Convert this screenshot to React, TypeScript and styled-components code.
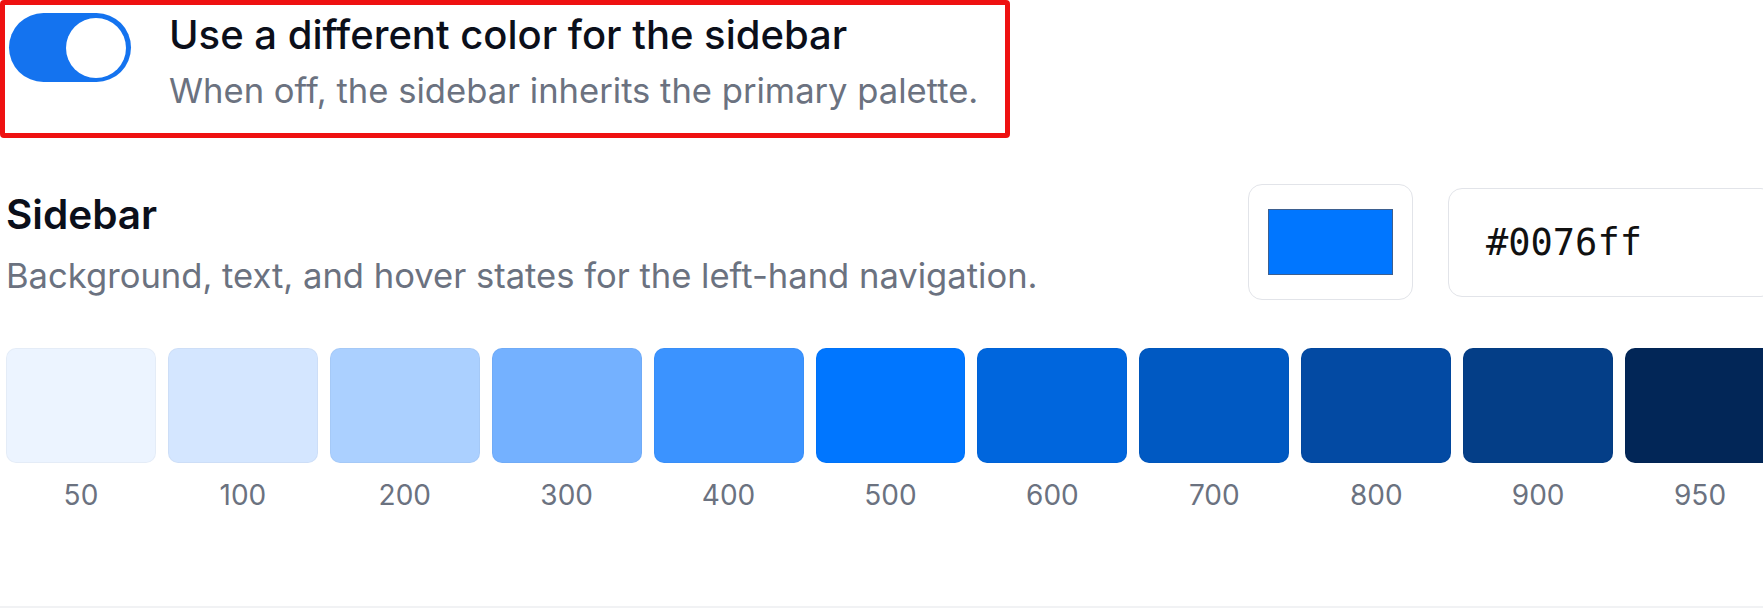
import React from 'react';
import styled, { createGlobalStyle } from 'styled-components';

const GlobalStyle = createGlobalStyle`
  html, body {
    margin: 0;
    padding: 0;
    background: #ffffff;
    overflow: hidden;
  }
  body {
    font-family: Inter, "Noto Sans", Arial, sans-serif;
    color: #111827;
  }
`;

const Page = styled.div`
  width: 1769px;
  padding-left: 6px;
  height: 608px;
  box-sizing: content-box;
  display: flex;
  flex-direction: column;
`;

const Highlight = styled.div`
  margin-left: -6px;
  width: 1010px;
  box-sizing: border-box;
  border: 5px solid #ee1111;
  border-radius: 4px;
  display: flex;
  align-items: flex-start;
  gap: 38px;
  padding: 2px 0 20px 4px;
`;

const Toggle = styled.button<{ on: boolean }>`
  flex: none;
  margin-top: 6px;
  width: 122px;
  height: 69px;
  border: none;
  border-radius: 999px;
  padding: 0 5px;
  background: ${p => (p.on ? '#1473ef' : '#e5e7eb')};
  display: flex;
  align-items: center;
  justify-content: ${p => (p.on ? 'flex-end' : 'flex-start')};
  cursor: pointer;
`;

const Thumb = styled.span`
  width: 60px;
  height: 60px;
  border-radius: 50%;
  background: #ffffff;
`;

const TextBlock = styled.div`
  display: flex;
  flex-direction: column;
  gap: 5px;
`;

const Title = styled.div`
  font-size: 40px;
  line-height: 55px;
  font-weight: 500;
  color: #0b0f1a;
`;

const Hint = styled.div<{ spaced?: boolean }>`
  margin-top: ${p => (p.spaced ? '9px' : '0')};
  font-size: 34.6px;
  line-height: 46px;
  color: #6b7280;
`;

const Header = styled.div`
  margin-top: 46px;
  display: flex;
  align-items: center;
  justify-content: space-between;
`;

const Heading = styled.div`
  font-size: 40.5px;
  line-height: 56px;
  font-weight: 600;
  color: #0b0f1a;
`;

const Controls = styled.div`
  display: flex;
  align-items: center;
  gap: 35px;
`;

const ColorWell = styled.div`
  width: 165px;
  height: 116px;
  box-sizing: border-box;
  border: 1.5px solid #e2e4e9;
  border-radius: 14px;
  display: flex;
  align-items: center;
  justify-content: center;
`;

const ColorChip = styled.div<{ color: string }>`
  width: 125px;
  height: 66px;
  box-sizing: border-box;
  background: ${p => p.color};
  border: 1.5px solid #3d5f8f;
`;

const HexInput = styled.div`
  width: 327px;
  height: 109px;
  box-sizing: border-box;
  border: 1.5px solid #e2e4e9;
  border-radius: 14px;
  padding-left: 37px;
  display: flex;
  align-items: center;
  font-family: "DejaVu Sans Mono", "Liberation Mono", monospace;
  font-size: 37px;
  color: #111111;
`;

const Scale = styled.div`
  margin-top: 48px;
  display: grid;
  grid-template-columns: repeat(11, 1fr);
  gap: 12px;
`;

const Step = styled.div`
  display: flex;
  flex-direction: column;
  align-items: center;
`;

const Swatch = styled.div<{ color: string }>`
  width: 100%;
  height: 115px;
  border-radius: 10px;
  background: ${p => p.color};
  box-shadow: inset 0 0 0 1px rgba(0, 0, 0, 0.03);
`;

const StepLabel = styled.div`
  margin-top: 14px;
  font-size: 28px;
  line-height: 37px;
  color: #6b7280;
`;

const Divider = styled.div`
  margin-top: auto;
  height: 2px;
  margin-left: -6px;
  width: 1763px;
  background: #f1f2f4;
`;

const palette: [string, string][] = [
  ['50', '#ecf4ff'],
  ['100', '#d4e6ff'],
  ['200', '#abd0ff'],
  ['300', '#74b1ff'],
  ['400', '#3b93ff'],
  ['500', '#0076ff'],
  ['600', '#0066dd'],
  ['700', '#0059c2'],
  ['800', '#034aa3'],
  ['900', '#043e87'],
  ['950', '#022657'],
];

export default function App() {
  const [on, setOn] = React.useState(true);
  return (
    <>
      <GlobalStyle />
      <Page>
        <Highlight>
          <Toggle on={on} onClick={() => setOn(!on)} aria-pressed={on}>
            <Thumb />
          </Toggle>
          <TextBlock>
            <Title>Use a different color for the sidebar</Title>
            <Hint>When off, the sidebar inherits the primary palette.</Hint>
          </TextBlock>
        </Highlight>

        <Header>
          <div>
            <Heading>Sidebar</Heading>
            <Hint spaced>Background, text, and hover states for the left-hand navigation.</Hint>
          </div>
          <Controls>
            <ColorWell>
              <ColorChip color="#0076ff" />
            </ColorWell>
            <HexInput>#0076ff</HexInput>
          </Controls>
        </Header>

        <Scale>
          {palette.map(([name, color]) => (
            <Step key={name}>
              <Swatch color={color} />
              <StepLabel>{name}</StepLabel>
            </Step>
          ))}
        </Scale>
        <Divider />
      </Page>
    </>
  );
}
